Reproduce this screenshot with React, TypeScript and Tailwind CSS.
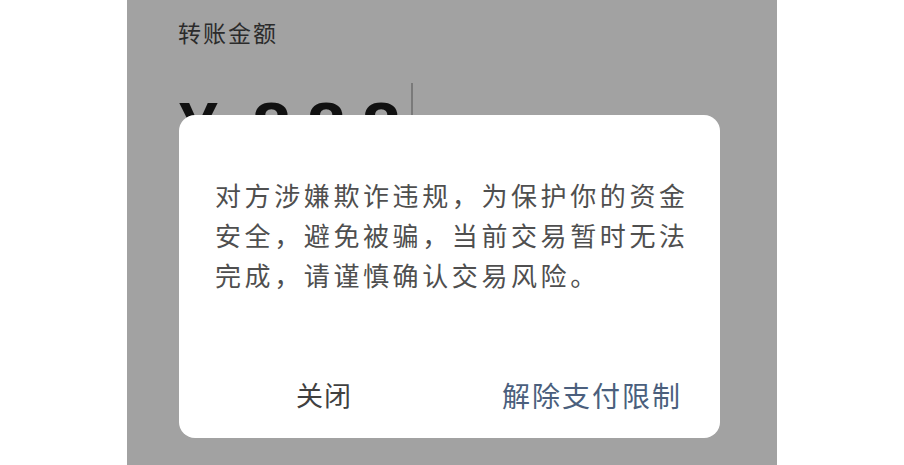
import React from "react";

export default function App() {
  const cjk = { fontFamily: '"Noto Sans CJK SC", "Noto Sans", sans-serif' } as React.CSSProperties;
  return (
    <div className="w-[904px] h-[465px] bg-white flex overflow-hidden">
      <div className="ml-[127px] w-[650px] h-full bg-[#a2a2a2] relative">
        <div className="pl-[51px] pt-[16px]">
          <div
            className="text-[23px] leading-[32px] tracking-[2px] text-[#2b2b2b]"
            style={cjk}
          >
            转账金额
          </div>
          <div className="mt-[45px] flex items-start h-[80px]">
            <span
              className="text-[70px] leading-[70px] font-bold text-[#111] ml-[1px]"
              style={{ fontFamily: '"Liberation Sans", Arial, sans-serif' }}
            >
              ¥
            </span>
            <span
              className="ml-[34px] text-[70px] leading-[70px] font-bold text-[#111] tracking-[16px]"
              style={{ fontFamily: '"Liberation Sans", Arial, sans-serif' }}
            >
              888
            </span>
            <span className="-ml-[6px] -mt-[10px] w-[2px] h-[40px] bg-[#7a7a7a]" />
          </div>
        </div>

        <div className="absolute left-[52px] top-[115px] w-[541px] h-[323px] bg-white rounded-[16px] flex flex-col">
          <div
            className="pt-[60px] pl-[36px] text-[26px] leading-[40px] tracking-[3.6px] text-[#4f4f4f]"
            style={cjk}
          >
            <div className="whitespace-nowrap">对方涉嫌欺诈违规，为保护你的资金</div>
            <div className="whitespace-nowrap">安全，避免被骗，当前交易暂时无法</div>
            <div className="whitespace-nowrap">完成，请谨慎确认交易风险。</div>
          </div>
          <div className="mt-[70px] h-[60px] grid grid-cols-2 pl-[13px]" style={cjk}>
            <div className="flex items-center justify-center text-[27px] tracking-[1px] text-[#404040]">
              关闭
            </div>
            <div className="flex items-center justify-center pl-[8px] text-[28px] tracking-[2px] text-[#4b5f7d]">
              解除支付限制
            </div>
          </div>
        </div>
      </div>
    </div>
  );
}
